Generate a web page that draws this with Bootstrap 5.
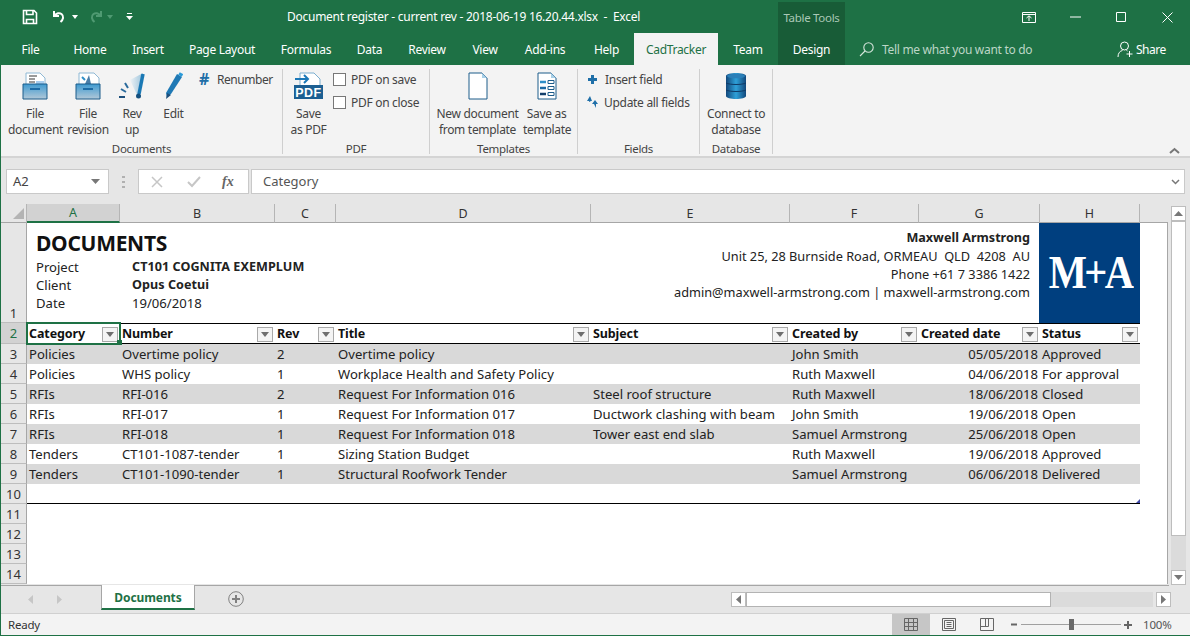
<!DOCTYPE html>
<html lang="en">
<head>
<meta charset="utf-8">
<title>Document register</title>
<link href="https://cdn.jsdelivr.net/npm/bootstrap@5.3.0/dist/css/bootstrap.min.css" rel="stylesheet">
<style>
html,body{height:636px;overflow:hidden}
body{font-family:"Noto Sans","Open Sans",sans-serif;font-size:12px;color:#333;background:#e6e6e6;width:1190px}
.xw{height:636px;border-left:1px solid #1e7145;border-bottom:1px solid #1e7145}
.xtitle{height:33px;background:#1e7145;color:#fff}
.xqat{width:140px;padding-left:21px;flex:none}
.xcaption{width:637px;flex:none;padding-left:146px;padding-top:1px;letter-spacing:-.26px;white-space:pre}
.xtt{width:67px;height:31px;margin-top:2px;background:#185c37;color:#a9c8b6;text-align:center;line-height:31px;font-size:11.5px;letter-spacing:-.3px}
.xwin{width:184px}
.xwin span{width:46px;text-align:center}
.xtabs{height:32px;background:#1e7145;color:#fff;letter-spacing:-.3px}
.xtab{height:32px;line-height:34px;text-align:center;white-space:nowrap}
.xtab.on{background:#f3f3f3;color:#1e7145}
.xtab.dk{background:#185c37}
.xtell{color:#bcd6c6;margin-left:14px;width:258px;gap:8px;padding-top:1px}
.xshare{gap:2px;letter-spacing:-.5px;padding-top:1px}
.xribbon{height:93px;background:#f3f3f3;border-bottom:2px solid #d4d4d4;font-size:12px;letter-spacing:-.3px;color:#444}
.xgroup{position:relative;height:85px;margin-top:4px;border-right:1px solid #cfcfcf}
.xg1{width:282px}.xg2{width:147px}.xg3{width:148px}.xg4{width:122px}.xg5{width:73px}
.xglabel{position:absolute;left:0;right:0;bottom:-3px;text-align:center;line-height:16px;font-size:11.5px}
.xbig{text-align:center;line-height:16px;padding-top:3px;white-space:nowrap}
.xbig svg{display:block;margin:0 auto 6px;height:28px}
.xsmall{height:23px;line-height:22px;white-space:nowrap;gap:5px}
.xchk{width:13px;height:13px;border:1px solid #777;background:#fff;display:inline-block}
.xfbar{height:46px;padding:11px 5px 0 5px;background:#e6e6e6;font-size:13px}
.xbox{height:25px;background:#fff;border:1px solid #c9c9c9;line-height:23px;padding-left:6px}
.xname{width:103px;color:#444}
.xfx{width:111px;margin-right:2px}
.xform{flex:1;color:#555;padding-left:11px}
.xsheetwrap{height:381px}
.xsheet{table-layout:fixed;border-collapse:separate;border-spacing:0;width:1167px;font-size:13.1px;color:#222;background:#fff}
.xsheet td,.xsheet th{padding:0 2px;white-space:nowrap;overflow:hidden;height:20px;line-height:19px;font-weight:400}
.xsheet thead th{height:19px;line-height:17px;background:#e6e6e6;text-align:center;border-bottom:1px solid #a6a6a6;border-right:1px solid #b5b5b5;color:#333;font-size:12.5px;padding:1px 0 0}
.xsheet thead th.sel{background:#d2d2d2;color:#1e7145;border-bottom:2px solid #1e7145;line-height:16px}
.xsheet thead th.none{background:#e6e6e6;border-right:0;border-bottom:1px solid #a6a6a6}
.xsheet tbody th.rh{background:#e6e6e6;text-align:center;padding:1px 0 0;border-bottom:1px solid #bdbdbd;border-right:1px solid #a6a6a6;color:#333;font-size:13px;line-height:18px}
.xsheet tbody th.rh.sel{background:#d2d2d2;color:#1e7145}
.xsheet td.lastc{border-right:1px solid #a6a6a6;background:#fff}
.xsheet .xhead td{height:21px;padding-top:1px;border-top:1px solid #000;border-bottom:1px solid #000;font-weight:700;position:relative;color:#111;line-height:18px;font-size:12.5px;letter-spacing:-.1px}
.xsheet tbody .xhead th.rh{height:21px;line-height:19px}
.xsheet .xhead td.lastc,.xalt td.lastc,.xend td.lastc{border-top:0;border-bottom:0;background:#fff}
.xflt{position:absolute;right:2px;top:3px;width:16px;height:15px;background:#f4f4f4;border:1px solid #a9a9a9}
.xflt::after{content:"";position:absolute;left:3px;top:4px;border:4px solid transparent;border-top:5px solid #6e6e6e;border-bottom:0}
.xsheet .xhead td.xactive{outline:2px solid #1e7145;outline-offset:-1px;overflow:visible;z-index:2}
.xactive::after{content:"";position:absolute;right:-2px;bottom:-2px;width:5px;height:5px;background:#1e7145;border:0;z-index:3}
.xalt td{background:#d9d9d9}
.xend td{border-bottom:1px solid #000}
.xcorner{position:relative}
.xcorner::after{content:"";position:absolute;right:0;bottom:0;border-style:solid;border-width:0 0 4px 4px;border-color:transparent transparent #3f48a8 transparent}
.xsheet .xtop td{height:100px;padding:0}
.xsheet .xtop .xtl{vertical-align:top;padding:6px 0 0 9px}
.xsheet .xtop .xtr{vertical-align:top;text-align:right;padding:5px 10px 0 0;line-height:18px;font-size:12.75px}
.xtop b{font-size:12.6px}
.xh1{font-size:21px;font-weight:700;line-height:29px;color:#111;letter-spacing:-.3px}
.xmeta{line-height:18px;display:grid;grid-template-columns:96px 1fr}
.xmeta b{letter-spacing:.05px}
.xsheet .xtop td.xlogo{background:#003f7f;box-shadow:-1px 0 0 #003f7f;color:#fff;text-align:center;vertical-align:middle;font-family:"Liberation Serif",serif;font-weight:700;font-size:46px;letter-spacing:-3px;line-height:46px}
.xlogo span{display:inline-block;transform:scaleX(.88)}
.xnum{text-align:right}
.xvs{width:19px;padding:2px 4px 0 0;margin-left:3px}
.xvb{height:15px;background:#fff;border:1px solid #bdbdbd;flex:none}
.xvt{background:#fff;border:1px solid #bdbdbd;height:315px;flex:none}
.xvr{flex:1;background:#dbdbdb}
.xsbar{height:28px;background:#e6e6e6;border-top:1px solid #a6a6a6;margin-right:21px}
.xstab{width:94px;height:25px;margin-left:23px;background:#fff;border-left:1px solid #a6a6a6;border-right:1px solid #a6a6a6;border-bottom:2px solid #1e7145;color:#1e7145;font-weight:700;text-align:center;line-height:26px;margin-top:-1px;letter-spacing:-.1px}
.xnav{width:77px;padding-left:27px;gap:24px}
.xhs{position:absolute;left:731px;top:592px;height:16px;width:440px}
.xhb{width:15px;height:15px;background:#fff;border:1px solid #bdbdbd;flex:none}
.xht{width:305px;height:15px;background:#fff;border:1px solid #b3b3b3;flex:none}
.xhr{width:102px;height:15px;background:#dbdbdb;flex:none;margin-right:3px}
.xstatus{height:22px;background:#f3f3f3;border-top:1px solid #d0d0d0;letter-spacing:-.2px;font-size:11.5px;line-height:19px;padding-left:7px}
.xview{height:21px;width:38px}
.xview.on{background:#c6c6c6}
.xslide{width:100px;height:1px;background:#a0a0a0;position:relative;margin:0 3px 0 4px}
.xslide i{position:absolute;left:48px;top:-5px;width:5px;height:11px;background:#6a6a6a}
.xpct{width:47px;margin-left:11px;color:#555;white-space:nowrap}
</style>
</head>
<body>
<div class="xw d-flex flex-column">
  <!-- title bar -->
  <div class="xtitle d-flex align-items-center">
    <div class="xqat d-flex align-items-center">
      <svg width="16" height="16" viewBox="0 0 16 16" fill="none" stroke="#fff" stroke-width="1.6"><path d="M1.500 1.500h10.500l2.500 2.500v10.500h-13z"/><path d="M4.500 1.500v4h6.500v-4M4.500 14.500v-4h7v4"/></svg>
      <svg width="16" height="16" viewBox="0 0 16 16" fill="none" stroke="#fff" stroke-width="2" style="margin-left:14px"><path d="M2 2v5h5M2.500 7c2-3 5-3.500 7-2 2.500 2 2 5.500-1 8"/></svg>
      <svg width="6" height="4" viewBox="0 0 6 4" style="margin-left:4px"><path d="M0 0h6L3 4z" fill="#fff"/></svg>
      <svg width="16" height="16" viewBox="0 0 16 16" fill="none" stroke="#4f9a72" stroke-width="2" style="margin-left:9px"><path d="M14 2v5H9M13.500 7c-2-3-5-3.500-7-2-2.500 2-2 5.500 1 8"/></svg>
      <svg width="6" height="4" viewBox="0 0 6 4" style="margin-left:4px"><path d="M0 0h6L3 4z" fill="#4f9a72"/></svg>
      <svg width="7" height="8" viewBox="0 0 7 8" style="margin-left:13px"><path d="M1 .5h5" stroke="#fff"/><path d="M0 3h7L3.500 7z" fill="#fff"/></svg>
    </div>
    <div class="xcaption">Document register - current rev - 2018-06-19 16.20.44.xlsx  -  Excel</div>
    <div class="xtt align-self-start">Table Tools</div>
    <div class="ms-auto xwin d-flex align-items-center">
      <span><svg width="14" height="11" viewBox="0 0 14 11" fill="none" stroke="#fff"><path d="M.5.500h13v10h-13zM.5 2.500h13M7 9V4M4.500 6 7 3.800 9.500 6"/></svg></span>
      <span><svg width="11" height="2" viewBox="0 0 11 2"><path d="M0 1h11" stroke="#fff"/></svg></span>
      <span><svg width="10" height="10" viewBox="0 0 10 10" fill="none" stroke="#fff"><path d="M.5.500h9v9h-9z"/></svg></span>
      <span><svg width="11" height="11" viewBox="0 0 11 11" stroke="#fff"><path d="M.5.500l10 10M10.500.500l-10 10"/></svg></span>
    </div>
  </div>
  <!-- tabs -->
  <div class="xtabs d-flex">
    <div class="xtab" style="width:59px">File</div>
    <div class="xtab" style="width:60px">Home</div>
    <div class="xtab" style="width:56px">Insert</div>
    <div class="xtab" style="width:92px">Page Layout</div>
    <div class="xtab" style="width:76px">Formulas</div>
    <div class="xtab" style="width:51px">Data</div>
    <div class="xtab" style="width:64px">Review</div>
    <div class="xtab" style="width:52px">View</div>
    <div class="xtab" style="width:68px">Add-ins</div>
    <div class="xtab" style="width:55px">Help</div>
    <div class="xtab on" style="width:84px">CadTracker</div>
    <div class="xtab" style="width:60px">Team</div>
    <div class="xtab dk" style="width:67px">Design</div>
    <div class="xtell d-flex align-items-center">
      <svg width="15" height="15" viewBox="0 0 15 15" fill="none" stroke="#d6e6dc" stroke-width="1.100"><circle cx="9.500" cy="5.500" r="4.700"/><path d="M6 9 1 14"/></svg>
      <span>Tell me what you want to do</span>
    </div>
    <div class="xshare d-flex align-items-center">
      <svg width="17" height="17" viewBox="0 0 17 17" fill="none" stroke="#fff"><circle cx="7.500" cy="5" r="4"/><path d="M1 16c0-4 2-6 4.500-6.500M9.500 9.500l1 .5M12.500 10v6M9.500 13h6"/></svg>
      <span>Share</span>
    </div>
  </div>
  <!-- ribbon -->
  <div class="xribbon d-flex position-relative">
    <div class="xgroup xg1 d-flex">
      <div class="xbig" style="width:61px;padding-left:7px">
        <svg width="26" height="28" viewBox="0 0 26 28"><path d="M4 1h14l5 5v8H4z" fill="#fff" stroke="#8eb8d4"/><path d="M7 4h8M7 7h6M7 10h6" stroke="#9a9a9a" stroke-width="2"/><path d="M14 9h8v5h-8z" fill="#a8cdee"/><path d="M1 12h24v15H1z" fill="url(#dr)" stroke="#1d5c8a"/><path d="M8 17h10" stroke="#1d6ba5" stroke-width="2"/><defs><linearGradient id="dr" x1="0" y1="0" x2="0" y2="1"><stop offset="0" stop-color="#3f9ad0"/><stop offset="1" stop-color="#b2c8d8"/></linearGradient></defs></svg>
        File<br>document
      </div>
      <div class="xbig" style="width:52px">
        <svg width="26" height="28" viewBox="0 0 26 28"><path d="M4 1h15l5 5v8H4z" fill="#fff" stroke="#8eb8d4"/><path d="M10 12 14 3l2 9z" fill="#4a7ea8"/><path d="M7 5l3 3" stroke="#2f8fc8" stroke-width="2"/><path d="M1 12h24v15H1z" fill="url(#dr)" stroke="#1d5c8a"/><path d="M8 17h10" stroke="#1d6ba5" stroke-width="2"/></svg>
        File<br>revision
      </div>
      <div class="xbig" style="width:36px">
        <svg width="28" height="28" viewBox="0 0 28 28" style="margin-left:4px;margin-right:-4px"><path d="M12 8 25 1l-5 24z" fill="url(#ga)"/><path d="M25 2l-4 20" stroke="#1a78b4" stroke-width="3.500"/><circle cx="20.500" cy="24" r="2.500" fill="#14507f"/><path d="M1 25h6" stroke="#1d4f7c" stroke-width="2"/><path d="M3 17l5 3M7 11l3 5" stroke="#2a6a9c" stroke-width="2"/><defs><linearGradient id="ga" x1="1" x2="0"><stop offset="0" stop-color="#9cc4dc"/><stop offset="1" stop-color="#eef2f5"/></linearGradient></defs></svg>
        Rev<br>up
      </div>
      <div class="xbig" style="width:47px">
        <svg width="18" height="28" viewBox="0 0 18 28"><path d="M12 2l5 3-11 17-4 3-1-4z" fill="#1f79b5"/><path d="M14 1.500l3.500 2" stroke="#2a9ad8" stroke-width="3"/><path d="M2 21l4 2-5 4z" fill="#1d4f7c"/></svg>
        Edit
      </div>
      <div class="xsmall d-flex" style="margin-left:2px;margin-top:0;letter-spacing:-.45px"><span class="fw-bold" style="color:#1f6fa8;font-size:16px;line-height:21px;width:13px;letter-spacing:0">#</span><span>Renumber</span></div>
      <div class="xglabel">Documents</div>
    </div>
    <div class="xgroup xg2 d-flex">
      <div class="xbig" style="width:50px;padding-left:1px">
        <svg width="30" height="28" viewBox="0 0 30 28" style="margin-left:10px"><path d="M6 1h14l6 6v8H6z" fill="#fff" stroke="#7aaed0"/><path d="M1 7h13M10 3l4 4-4 4" fill="none" stroke="#1b78b8" stroke-width="2"/><path d="M0 13h29v14H0z" fill="#1c5f92"/><text x="14.500" y="25" text-anchor="middle" font-family="Liberation Sans,sans-serif" font-weight="700" font-size="12.500" fill="#fff" letter-spacing=".5">PDF</text></svg>
        Save<br>as PDF
      </div>
      <div>
        <div class="xsmall d-flex align-items-center" style="margin-top:-1px"><span class="xchk"></span><span>PDF on save</span></div>
        <div class="xsmall d-flex align-items-center"><span class="xchk"></span><span>PDF on close</span></div>
      </div>
      <div class="xglabel">PDF</div>
    </div>
    <div class="xgroup xg3 d-flex">
      <div class="xbig" style="width:93px;padding-left:2px">
        <svg width="20" height="28" viewBox="0 0 20 28"><path d="M1 1h13l5 5v21H1z" fill="#fff" stroke="#1d5c8a"/><path d="M14 1v5h5z" fill="#a8d0e8"/></svg>
        New document<br>from template
      </div>
      <div class="xbig" style="width:47px">
        <svg width="20" height="28" viewBox="0 0 20 28"><path d="M1 1h13l5 5v21H1z" fill="#fff" stroke="#1d5c8a"/><path d="M14 1v5h5z" fill="#a8d0e8"/><path d="M3 10h6" stroke="#2f8fc8" stroke-width="2.500"/><path d="M3 16h6" stroke="#1d6ba5" stroke-width="2.500"/><path d="M3 22h6" stroke="#143f6b" stroke-width="2.500"/><path d="M11 8.500h6v3h-6zM11 14.500h6v3h-6zM11 20.500h6v3h-6z" fill="none" stroke="#1d5c8a"/></svg>
        Save as<br>template
      </div>
      <div class="xglabel">Templates</div>
    </div>
    <div class="xgroup xg4">
      <div class="xsmall d-flex align-items-center" style="padding-left:9px;margin-top:-1px;gap:7px"><svg width="11" height="11" viewBox="0 0 11 11"><path d="M4 1h3v3h3v3H7v3H4V7H1V4h3z" fill="#1f6fa8"/></svg><span>Insert field</span></div>
      <div class="xsmall d-flex align-items-center" style="padding-left:8px;gap:5px"><svg width="13" height="13" viewBox="0 0 13 13" fill="#1f6fa8"><path d="M4 0 1 5h2v1l2-1h1zM9 4l3 4h-2v4l-2-4H6z"/></svg><span>Update all fields</span></div>
      <div class="xglabel">Fields</div>
    </div>
    <div class="xgroup xg5">
      <div class="xbig">
        <svg width="22" height="28" viewBox="0 0 22 28"><defs><linearGradient id="db" x1="0" x2="1" y1="0" y2="0"><stop offset="0" stop-color="#12487c"/><stop offset=".5" stop-color="#2ea0d8"/><stop offset="1" stop-color="#12487c"/></linearGradient></defs><path d="M1 4c0-4 20-4 20 0v20c0 4-20 4-20 0z" fill="url(#db)"/><ellipse cx="11" cy="4" rx="9" ry="2.300" fill="#2b7fb8"/><path d="M1 11c4 2 16 2 20 0M1 18c4 2 16 2 20 0" fill="none" stroke="#0f3a66"/></svg>
        Connect to<br>database
      </div>
      <div class="xglabel">Database</div>
    </div>
    <svg class="position-absolute" style="right:10px;bottom:2px" width="11" height="7" viewBox="0 0 11 7" fill="none" stroke="#777" stroke-width="2"><path d="M1 6l4.500-4L10 6"/></svg>
  </div>
  <!-- formula bar -->
  <div class="xfbar d-flex position-relative align-items-start">
    <div class="xbox xname d-flex justify-content-between align-items-center pe-2"><span>A2</span><svg width="9" height="5" viewBox="0 0 9 5"><path d="M0 0h9L4.500 5z" fill="#777"/></svg></div>
    <div class="d-flex align-items-center justify-content-center" style="width:29px;height:25px"><svg width="3" height="12" viewBox="0 0 3 12" fill="#b0b0b0"><path d="M0 0h3v2H0zM0 5h3v2H0zM0 10h3v2H0z"/></svg></div>
    <div class="xbox xfx d-flex align-items-center" style="padding-left:12px">
      <svg width="12" height="12" viewBox="0 0 12 12" stroke="#c6c6c6" stroke-width="1.500"><path d="M1 1l10 10M11 1 1 11"/></svg>
      <svg width="14" height="12" viewBox="0 0 14 12" fill="none" stroke="#c6c6c6" stroke-width="2" style="margin-left:24px"><path d="M1 6l4 4 8-9"/></svg>
      <span class="fst-italic" style="font-family:'Liberation Serif',serif;font-size:14px;margin-left:21px;color:#666;font-weight:700">fx</span>
    </div>
    <div class="xbox xform">Category</div>
    <svg class="position-absolute" style="right:10px;top:21px" width="9" height="6" viewBox="0 0 9 6" fill="none" stroke="#777" stroke-width="1.500"><path d="M1 1l3.500 3.500L8 1"/></svg>
  </div>
  <!-- sheet -->
  <div class="xsheetwrap d-flex">
    <div>
      <table class="xsheet">
        <colgroup><col style="width:26px"><col style="width:93px"><col style="width:155px"><col style="width:61px"><col style="width:255px"><col style="width:199px"><col style="width:129px"><col style="width:121px"><col style="width:100px"><col style="width:28px"></colgroup>
        <thead>
          <tr><th><svg width="13" height="13" viewBox="0 0 13 13" class="d-block ms-auto" style="margin-right:1px"><path d="M12 1v11H1z" fill="#b4b4b4"/></svg></th><th class="sel">A</th><th>B</th><th>C</th><th>D</th><th>E</th><th>F</th><th>G</th><th>H</th><th class="none"></th></tr>
        </thead>
        <tbody>
          <tr class="xtop">
            <th class="rh" style="vertical-align:bottom">1</th>
            <td colspan="4" class="xtl">
              <div class="xh1">DOCUMENTS</div>
              <div class="xmeta"><span>Project</span><b>CT101 COGNITA EXEMPLUM</b><span>Client</span><b>Opus Coetui</b><span>Date</span><span>19/06/2018</span></div>
            </td>
            <td colspan="3" class="xtr"><b>Maxwell Armstrong</b><br>Unit 25, 28 Burnside Road, ORMEAU&nbsp; QLD&nbsp; 4208&nbsp; AU<br>Phone +61 7 3386 1422<br>admin@maxwell-armstrong.com | maxwell-armstrong.com</td>
            <td class="xlogo"><span>M+A</span></td>
            <td class="lastc"></td>
          </tr>
          <tr class="xhead">
            <th class="rh sel">2</th>
            <td class="xactive">Category<i class="xflt"></i></td><td>Number<i class="xflt"></i></td><td>Rev<i class="xflt"></i></td><td>Title<i class="xflt"></i></td><td>Subject<i class="xflt"></i></td><td>Created by<i class="xflt"></i></td><td>Created date<i class="xflt"></i></td><td>Status<i class="xflt"></i></td><td class="lastc"></td>
          </tr>
          <tr class="xalt"><th class="rh">3</th><td>Policies</td><td>Overtime policy</td><td>2</td><td>Overtime policy</td><td></td><td>John Smith</td><td class="xnum">05/05/2018</td><td>Approved</td><td class="lastc"></td></tr>
          <tr><th class="rh">4</th><td>Policies</td><td>WHS policy</td><td>1</td><td>Workplace Health and Safety Policy</td><td></td><td>Ruth Maxwell</td><td class="xnum">04/06/2018</td><td>For approval</td><td class="lastc"></td></tr>
          <tr class="xalt"><th class="rh">5</th><td>RFIs</td><td>RFI-016</td><td>2</td><td>Request For Information 016</td><td>Steel roof structure</td><td>Ruth Maxwell</td><td class="xnum">18/06/2018</td><td>Closed</td><td class="lastc"></td></tr>
          <tr><th class="rh">6</th><td>RFIs</td><td>RFI-017</td><td>1</td><td>Request For Information 017</td><td>Ductwork clashing with beam</td><td>John Smith</td><td class="xnum">19/06/2018</td><td>Open</td><td class="lastc"></td></tr>
          <tr class="xalt"><th class="rh">7</th><td>RFIs</td><td>RFI-018</td><td>1</td><td>Request For Information 018</td><td>Tower east end slab</td><td>Samuel Armstrong</td><td class="xnum">25/06/2018</td><td>Open</td><td class="lastc"></td></tr>
          <tr><th class="rh">8</th><td>Tenders</td><td>CT101-1087-tender</td><td>1</td><td>Sizing Station Budget</td><td></td><td>Ruth Maxwell</td><td class="xnum">19/06/2018</td><td>Approved</td><td class="lastc"></td></tr>
          <tr class="xalt"><th class="rh">9</th><td>Tenders</td><td>CT101-1090-tender</td><td>1</td><td>Structural Roofwork Tender</td><td></td><td>Samuel Armstrong</td><td class="xnum">06/06/2018</td><td>Delivered</td><td class="lastc"></td></tr>
          <tr class="xend"><th class="rh">10</th><td></td><td></td><td></td><td></td><td></td><td></td><td></td><td class="xcorner"></td><td class="lastc"></td></tr>
          <tr><th class="rh">11</th><td colspan="8"></td><td class="lastc"></td></tr>
          <tr><th class="rh">12</th><td colspan="8"></td><td class="lastc"></td></tr>
          <tr><th class="rh">13</th><td colspan="8"></td><td class="lastc"></td></tr>
          <tr><th class="rh">14</th><td colspan="8"></td><td class="lastc"></td></tr>
        </tbody>
      </table>
    </div>
    <div class="xvs d-flex flex-column">
      <div class="xvb d-flex align-items-center justify-content-center"><svg width="9" height="5" viewBox="0 0 9 5"><path d="M0 5h9L4.500 0z" fill="#777"/></svg></div>
      <div class="xvt"></div>
      <div class="xvr"></div>
      <div class="xvb d-flex align-items-center justify-content-center"><svg width="9" height="5" viewBox="0 0 9 5"><path d="M0 0h9L4.500 5z" fill="#777"/></svg></div>
    </div>
  </div>
  <!-- sheet tabs -->
  <div class="xsbar d-flex align-items-start">
    <div class="xnav d-flex align-items-center" style="height:26px"><svg width="5" height="9" viewBox="0 0 5 9"><path d="M5 0v9L0 4.500z" fill="#c6c6c6"/></svg><svg width="5" height="9" viewBox="0 0 5 9"><path d="M0 0v9l5-4.500z" fill="#c6c6c6"/></svg></div>
    <div class="xstab">Documents</div>
    <svg style="margin:5px 0 0 33px" width="16" height="16" viewBox="0 0 16 16" fill="none" stroke="#808080"><circle cx="8" cy="8" r="7.300"/><path d="M8 4v8M4 8h8" stroke-width="2"/></svg>
  </div>
  <div class="xhs d-flex">
    <div class="xhb d-flex align-items-center justify-content-center"><svg width="5" height="9" viewBox="0 0 5 9"><path d="M5 0v9L0 4.500z" fill="#777"/></svg></div>
    <div class="xht"></div>
    <div class="xhr"></div>
    <div class="xhb d-flex align-items-center justify-content-center"><svg width="5" height="9" viewBox="0 0 5 9"><path d="M0 0v9l5-4.500z" fill="#777"/></svg></div>
  </div>
  <!-- status -->
  <div class="xstatus d-flex align-items-center">
    <span>Ready</span>
    <div class="ms-auto d-flex align-items-center">
      <div class="xview on d-flex align-items-center justify-content-center"><svg width="14" height="13" viewBox="0 0 14 13" fill="none" stroke="#666"><path d="M.5.500h13v12H.5zM.5 4.500h13M.5 8.500h13M4.500.500v12M9.500.500v12"/></svg></div>
      <div class="xview d-flex align-items-center justify-content-center"><svg width="14" height="13" viewBox="0 0 14 13" fill="none" stroke="#666"><path d="M.5.500h13v12H.5zM2.500 2.500h9v8h-9zM4.500 4.500h5M4.500 6.500h5M4.500 8.500h5"/></svg></div>
      <div class="xview d-flex align-items-center justify-content-center"><svg width="14" height="13" viewBox="0 0 14 13" fill="none" stroke="#666"><path d="M.5.500h13v12H.5zM.5 8.500h8M5.500.500v8M8.500.500v8"/></svg></div>
      <svg width="6" height="3" viewBox="0 0 6 3" style="margin-left:5px"><path d="M0 1.500h6" stroke="#666" stroke-width="2"/></svg>
      <div class="xslide"><i></i></div>
      <svg width="8" height="8" viewBox="0 0 8 8"><path d="M4 0v8M0 4h8" stroke="#666" stroke-width="2"/></svg>
      <span class="xpct">100%</span>
    </div>
  </div>
</div>
<script src="https://cdn.jsdelivr.net/npm/bootstrap@5.3.0/dist/js/bootstrap.bundle.min.js"></script>
</body>
</html>
